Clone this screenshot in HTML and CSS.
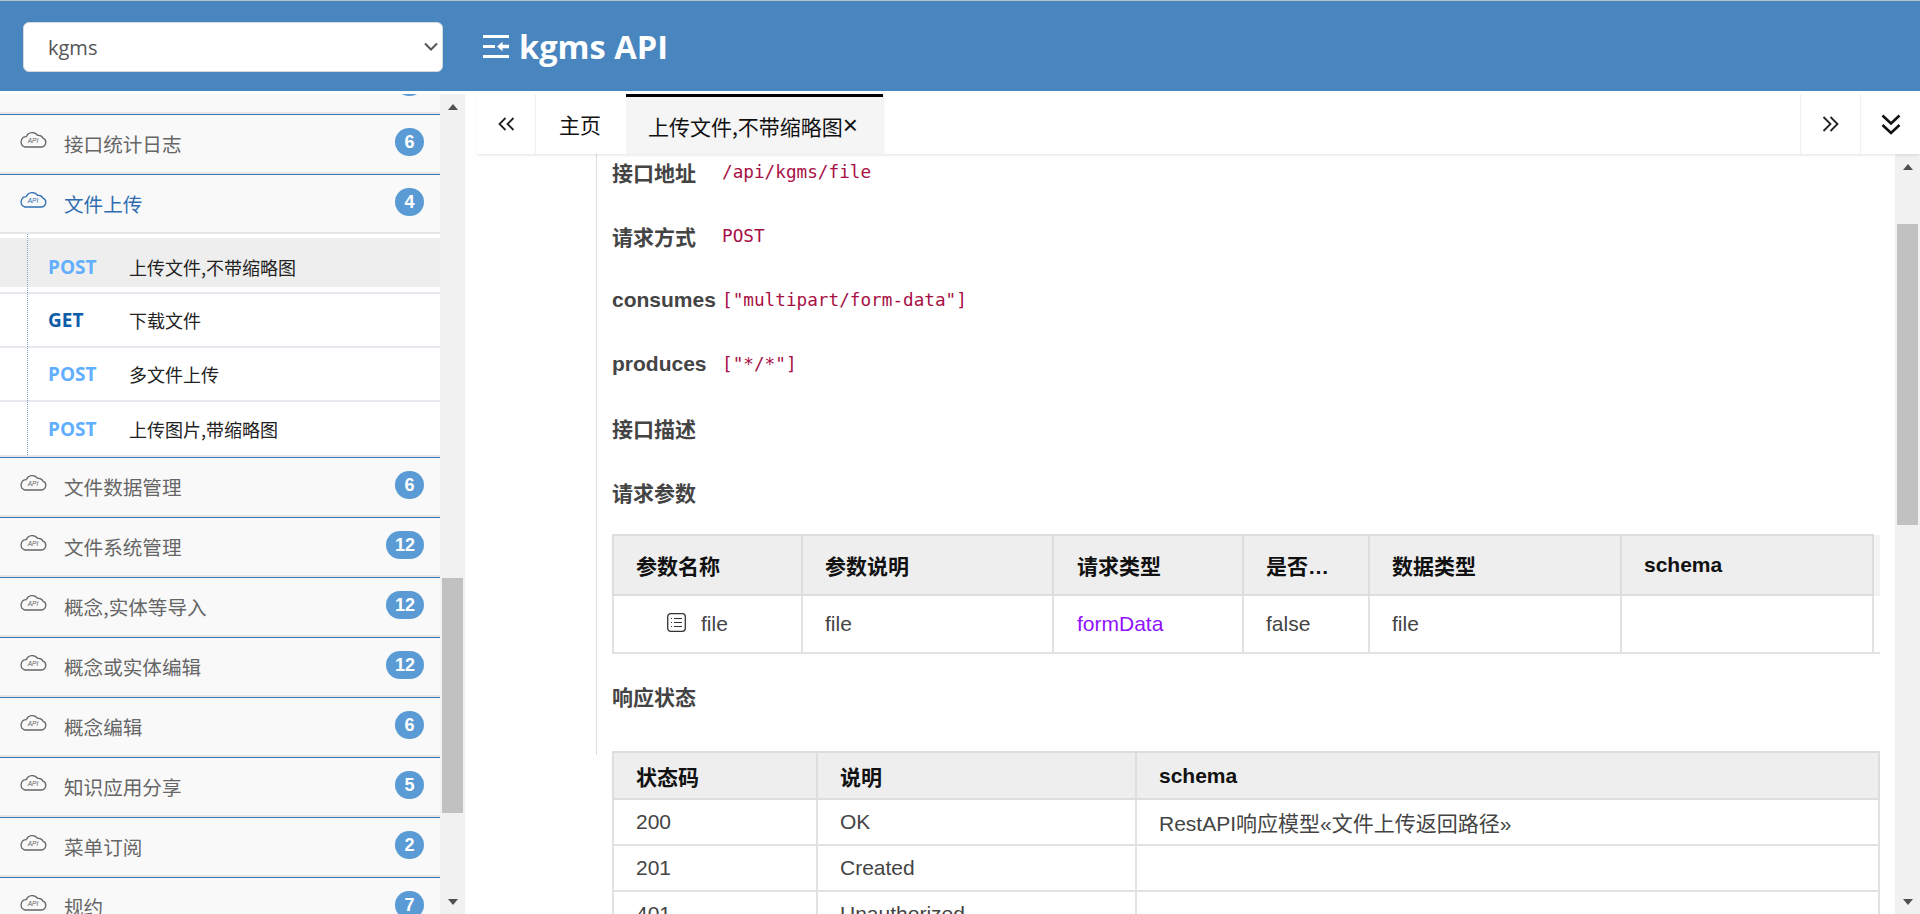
FILE: index.html
```html
<!DOCTYPE html>
<html lang="zh-CN">
<head>
<meta charset="utf-8">
<title>kgms API</title>
<link rel="stylesheet" href="styles.css">
</head>
<body>
<svg class="defs" width="0" height="0" aria-hidden="true">
  <symbol id="cloud" viewBox="0 0 28 17">
    <path d="M6 16H22.5A4.6 4.6 0 0 0 24 7.2 5 5 0 0 0 18.6 4.4 6.4 6.4 0 0 0 7.4 5.6 5.3 5.3 0 0 0 6 16Z" fill="none" stroke="currentColor" stroke-width="1.3"/>
    <text x="14" y="12.4" text-anchor="middle" font-family="Liberation Sans" font-size="6.5" font-style="italic" fill="currentColor">API</text>
  </symbol>
</svg>
<header class="topbar">
  <div class="select-wrap">
    <select class="group-select"><option>kgms</option></select>
    <svg class="select-chevron" viewBox="0 0 14 9"><path d="M1 1.5L7 7.5L13 1.5" fill="none" stroke="#555" stroke-width="2"/></svg>
  </div>
  <div class="brand">
    <svg class="brand-icon" viewBox="0 0 26 23"><path d="M0 1.5H26M0 11.5H12M0 21.5H26" stroke="#fff" stroke-width="3" fill="none"/><path d="M14 11.5L19.5 6.8V9.8H26V13.2H19.5V16.2Z" fill="#fff"/></svg>
    <span>kgms API</span>
  </div>
</header>
<div class="workspace">
  <aside class="sidebar">
    <nav class="nav">
      <div class="nav-row clipped"><span class="badge"></span></div>
      <div class="nav-row"><svg class="cloud"><use href="#cloud"/></svg><span class="nav-label">接口统计日志</span><span class="badge">6</span></div>
      <div class="nav-row open"><svg class="cloud"><use href="#cloud"/></svg><span class="nav-label">文件上传</span><span class="badge">4</span></div>
      <ul class="sub-list">
        <li class="sub-item active"><span class="method post">POST</span><span>上传文件,不带缩略图</span></li>
        <li class="sub-item"><span class="method get">GET</span><span>下载文件</span></li>
        <li class="sub-item"><span class="method post">POST</span><span>多文件上传</span></li>
        <li class="sub-item last"><span class="method post">POST</span><span>上传图片,带缩略图</span></li>
      </ul>
      <div class="nav-row"><svg class="cloud"><use href="#cloud"/></svg><span class="nav-label">文件数据管理</span><span class="badge">6</span></div>
      <div class="nav-row"><svg class="cloud"><use href="#cloud"/></svg><span class="nav-label">文件系统管理</span><span class="badge">12</span></div>
      <div class="nav-row"><svg class="cloud"><use href="#cloud"/></svg><span class="nav-label">概念,实体等导入</span><span class="badge">12</span></div>
      <div class="nav-row"><svg class="cloud"><use href="#cloud"/></svg><span class="nav-label">概念或实体编辑</span><span class="badge">12</span></div>
      <div class="nav-row"><svg class="cloud"><use href="#cloud"/></svg><span class="nav-label">概念编辑</span><span class="badge">6</span></div>
      <div class="nav-row"><svg class="cloud"><use href="#cloud"/></svg><span class="nav-label">知识应用分享</span><span class="badge">5</span></div>
      <div class="nav-row"><svg class="cloud"><use href="#cloud"/></svg><span class="nav-label">菜单订阅</span><span class="badge">2</span></div>
      <div class="nav-row"><svg class="cloud"><use href="#cloud"/></svg><span class="nav-label">规约</span><span class="badge">7</span></div>
    </nav>
    <div class="scrollbar nav-scroll">
      <span class="arrow-btn"><i class="tri up"></i></span>
      <span class="thumb"></span>
      <span class="arrow-btn end"><i class="tri down"></i></span>
    </div>
  </aside>
  <main class="main">
    <div class="tabbar">
      <button class="tab-ctl left"><svg viewBox="0 0 17 14" class="ico-h"><path d="M7.5 1L1.5 7L7.5 13M15.5 1L9.5 7L15.5 13" fill="none" stroke="#222" stroke-width="1.8"/></svg></button>
      <span class="tab home">主页</span>
      <span class="tab current">上传文件,不带缩略图<span class="close">×</span></span>
      <span class="tab-gap"></span>
      <button class="tab-ctl"><svg viewBox="0 0 17 16" class="ico-h"><path d="M1.5 1L8.5 8L1.5 15M8.5 1L15.5 8L8.5 15" fill="none" stroke="#222" stroke-width="1.8"/></svg></button>
      <button class="tab-ctl"><svg viewBox="0 0 20 21" class="ico-v"><path d="M1.5 1.5L10 9.5L18.5 1.5M1.5 11L10 19L18.5 11" fill="none" stroke="#111" stroke-width="2.6"/></svg></button>
    </div>
    <div class="main-body">
      <div class="doc">
        <section class="doc-block">
          <div class="field"><b class="field-name">接口地址</b><code class="field-value">/api/kgms/file</code></div>
          <div class="field"><b class="field-name">请求方式</b><code class="field-value">POST</code></div>
          <div class="field"><b class="field-name">consumes</b><code class="field-value">["multipart/form-data"]</code></div>
          <div class="field"><b class="field-name">produces</b><code class="field-value">["*/*"]</code></div>
          <div class="field"><b class="field-name">接口描述</b></div>
          <div class="field"><b class="field-name">请求参数</b></div>
          <table class="grid params">
            <thead><tr><th>参数名称</th><th>参数说明</th><th>请求类型</th><th>是否…</th><th>数据类型</th><th>schema</th><th></th></tr></thead>
            <tbody><tr>
              <td class="tree-cell"><svg class="list-icon" viewBox="0 0 19 19"><rect x=".7" y=".7" width="17.6" height="17.6" rx="3" fill="none" stroke="#333" stroke-width="1.3"/><path d="M7 5.5H15M7 9.5H15M7 13.5H15M4 5.5H5M4 9.5H5M4 13.5H5" stroke="#333" stroke-width="1.2"/></svg><span>file</span></td>
              <td>file</td><td class="purple">formData</td><td>false</td><td>file</td><td></td><td></td>
            </tr></tbody>
          </table>
          <div class="field response-title"><b class="field-name">响应状态</b></div>
        </section>
        <table class="grid status">
          <thead><tr><th>状态码</th><th>说明</th><th>schema</th></tr></thead>
          <tbody>
            <tr><td>200</td><td>OK</td><td>RestAPI响应模型«文件上传返回路径»</td></tr>
            <tr><td>201</td><td>Created</td><td></td></tr>
            <tr><td>401</td><td>Unauthorized</td><td></td></tr>
          </tbody>
        </table>
      </div>
      <div class="scrollbar main-scroll">
        <span class="arrow-btn"><i class="tri up"></i></span>
        <span class="thumb"></span>
        <span class="arrow-btn end"><i class="tri down"></i></span>
      </div>
    </div>
  </main>
</div>
</body>
</html>
```
FILE: styles.css
```css
* { box-sizing: border-box; }
html, body { margin: 0; height: 914px; overflow: hidden; background: #fff; }
body { font-family: "Liberation Sans", "Noto Sans CJK SC", sans-serif; color: #444; }
.defs { position: absolute; }

.topbar {
  height: 91px;
  background: #4986bf;
  border-top: 1px solid #b9c2ca;
  display: flex;
  align-items: center;
  padding-left: 23px;
}
.select-wrap { position: relative; width: 420px; height: 50px; margin-top: 2px; }
.group-select {
  width: 100%;
  height: 100%;
  padding-left: 24px;
  appearance: none;
  font: 20px "Open Sans", "Noto Sans CJK SC", sans-serif;
  color: #555;
  background: #fff;
  border: 1px solid #d5d8dc;
  border-radius: 6px;
}
.select-chevron { position: absolute; right: 5px; top: 20px; width: 14px; height: 9px; pointer-events: none; }
.brand {
  display: flex;
  align-items: center;
  gap: 10px;
  margin-left: 40px;
  color: #fff;
  font: 700 32.6px "Open Sans", sans-serif;
}
.brand-icon { width: 26px; height: 23px; }

.workspace { display: flex; height: 820px; margin-top: 3px; }
.sidebar { width: 465px; display: flex; flex: none; height: 100%; }
.nav { width: 440px; overflow: hidden; height: 100%; }

.nav-row {
  height: 60px;
  display: flex;
  align-items: center;
  padding: 0 16px 0 19px;
  background: #f9f9f9;
  border-top: 1px solid #3b78b2;
  border-bottom: 2px solid #e6e6e6;
  color: #666;
}
.nav-row.clipped { margin-top: -40px; justify-content: flex-end; }
.cloud { width: 28px; height: 17px; flex: none; color: #666; margin-top: -8px; }
.nav-label { margin-left: 17px; font-size: 19.6px; line-height: 28px; flex: 1; font-family: "Noto Sans CJK SC", sans-serif; }
.badge {
  min-width: 29px;
  height: 28px;
  padding: 0 9px;
  margin-top: -4px;
  border-radius: 14px;
  background: #5b9bd5;
  color: #fff;
  font: 700 18px/28px "Liberation Sans", sans-serif;
  text-align: center;
}
.nav-row.open, .nav-row.open .cloud { color: #2f6db0; }

.sub-list { list-style: none; margin: 0; padding: 4px 0 0; position: relative; background: #fff; }
.sub-list::before {
  content: "";
  position: absolute;
  left: 27px;
  top: 0;
  bottom: 2px;
  border-left: 1px dotted #7fa8cf;
  z-index: 1;
}
.sub-item {
  height: 54px;
  display: flex;
  align-items: center;
  padding-left: 48px;
  border-bottom: 2px solid #e8e8ee;
  color: #222;
  font: 18px "Noto Sans CJK SC", sans-serif;
}
.sub-item.active {
  height: 56px;
  padding-top: 3px;
  background: linear-gradient(#eee, #eee) 0 0 / 100% 49px no-repeat;
}
.sub-item.last { height: 55px; padding-top: 1px; }
.method { width: 81px; font: 700 19px "Open Sans", sans-serif; }
.post { color: #61affe; }
.get { color: #0f5ca8; }

.scrollbar { width: 25px; flex: none; background: #f1f1f1; display: flex; flex-direction: column; align-items: center; height: 100%; }
.arrow-btn { height: 25px; width: 100%; flex: none; display: flex; align-items: center; justify-content: center; }
.arrow-btn.end { margin-top: auto; }
.tri { width: 0; height: 0; border-left: 5px solid transparent; border-right: 5px solid transparent; }
.tri.up { border-bottom: 6px solid #505050; }
.tri.down { border-top: 6px solid #505050; }
.thumb { width: 21px; background: #c1c1c1; flex: none; }
.nav-scroll .thumb { height: 235px; margin-top: 459px; }
.main-scroll .thumb { height: 301px; margin-top: 45px; }

.main { flex: 1; min-width: 0; height: 100%; display: flex; flex-direction: column; }
.tabbar {
  height: 60px;
  margin-left: 12px;
  display: flex;
  flex: none;
  background: #fff;
  box-shadow: 0 2px 3px -1px rgba(0, 0, 0, .12);
  position: relative;
  z-index: 2;
}
.tab-ctl {
  width: 60px;
  border: 0;
  border-left: 1px solid #f1f1f1;
  background: #fff;
  padding: 0;
  display: flex;
  align-items: center;
  justify-content: center;
}
.tab-ctl.left { width: 59px; border-left: 0; border-right: 1px solid #f1f1f1; }
.ico-h { width: 17px; height: 16px; }
.ico-v { width: 20px; height: 21px; }
.tab {
  display: flex;
  align-items: center;
  padding: 0 23px;
  font: 21px "Noto Sans CJK SC", sans-serif;
  color: #111;
}
.tab.home { width: 90px; }
.tab.current { width: 257px; padding: 0 0 0 22px; background: #f5f5f5; border-top: 3px solid #000; white-space: nowrap; }
.close { font: 26px "Liberation Sans", sans-serif; }
.tab-gap { flex: 1; border-left: 1px solid #f1f1f1; }

.main-body { flex: 1; min-height: 0; display: flex; }
.doc { flex: 1; min-width: 0; overflow: hidden; padding-left: 131px; }
.doc-block { border-left: 1px solid #ddd; padding: 0 0 27px 15px; width: 1284px; }
.field { height: 64px; display: flex; align-items: center; font-size: 21px; }
.field:first-child { margin-top: -14px; }
.field-name { width: 110px; flex: none; color: #444; font-weight: 700; font-size: 21px; white-space: nowrap; }
.field-value { font: 17.7px "DejaVu Sans Mono", monospace; color: #a81045; }
.response-title { margin-top: 10px; }

.grid {
  border-collapse: collapse;
  table-layout: fixed;
  width: 1268px;
  font-size: 21px;
  color: #444;
}
.grid th, .grid td { border: 2px solid #e2e2e2; padding: 0 0 0 22px; text-align: left; overflow: hidden; white-space: nowrap; }
.grid th { background: #eee; color: #111; font-weight: 700; border-color: #ddd; }
.params { margin-top: 10px; }
.params th { height: 60px; }
.params td { height: 58px; }
.params th:nth-child(1) { width: 189px; }
.params th:nth-child(2) { width: 251px; }
.params th:nth-child(3) { width: 190px; padding-left: 23px; }
.params td:nth-child(3) { padding-left: 23px; }
.params th:nth-child(4) { width: 126px; }
.params th:nth-child(5) { width: 252px; }
.params th:nth-child(6) { width: 252px; }
.params th:nth-child(7) { padding: 0; background: #f4f4f4; border-color: #f1f1f1; border-right: 0; border-top: 0; }
.params td:nth-child(7) { padding: 0; border-right: 0; border-top: 0; }
.tree-cell { padding-left: 53px !important; }
.tree-cell span { vertical-align: middle; }
.list-icon { width: 19px; height: 19px; margin-right: 15px; vertical-align: middle; margin-top: -4px; }
.purple { color: #9012fe; }
.status { margin: -4px 0 0 16px; }
.status th { height: 47px; }
.status td { height: 46px; }
.status th:nth-child(1) { width: 204px; }
.status th:nth-child(2) { width: 319px; }
```
